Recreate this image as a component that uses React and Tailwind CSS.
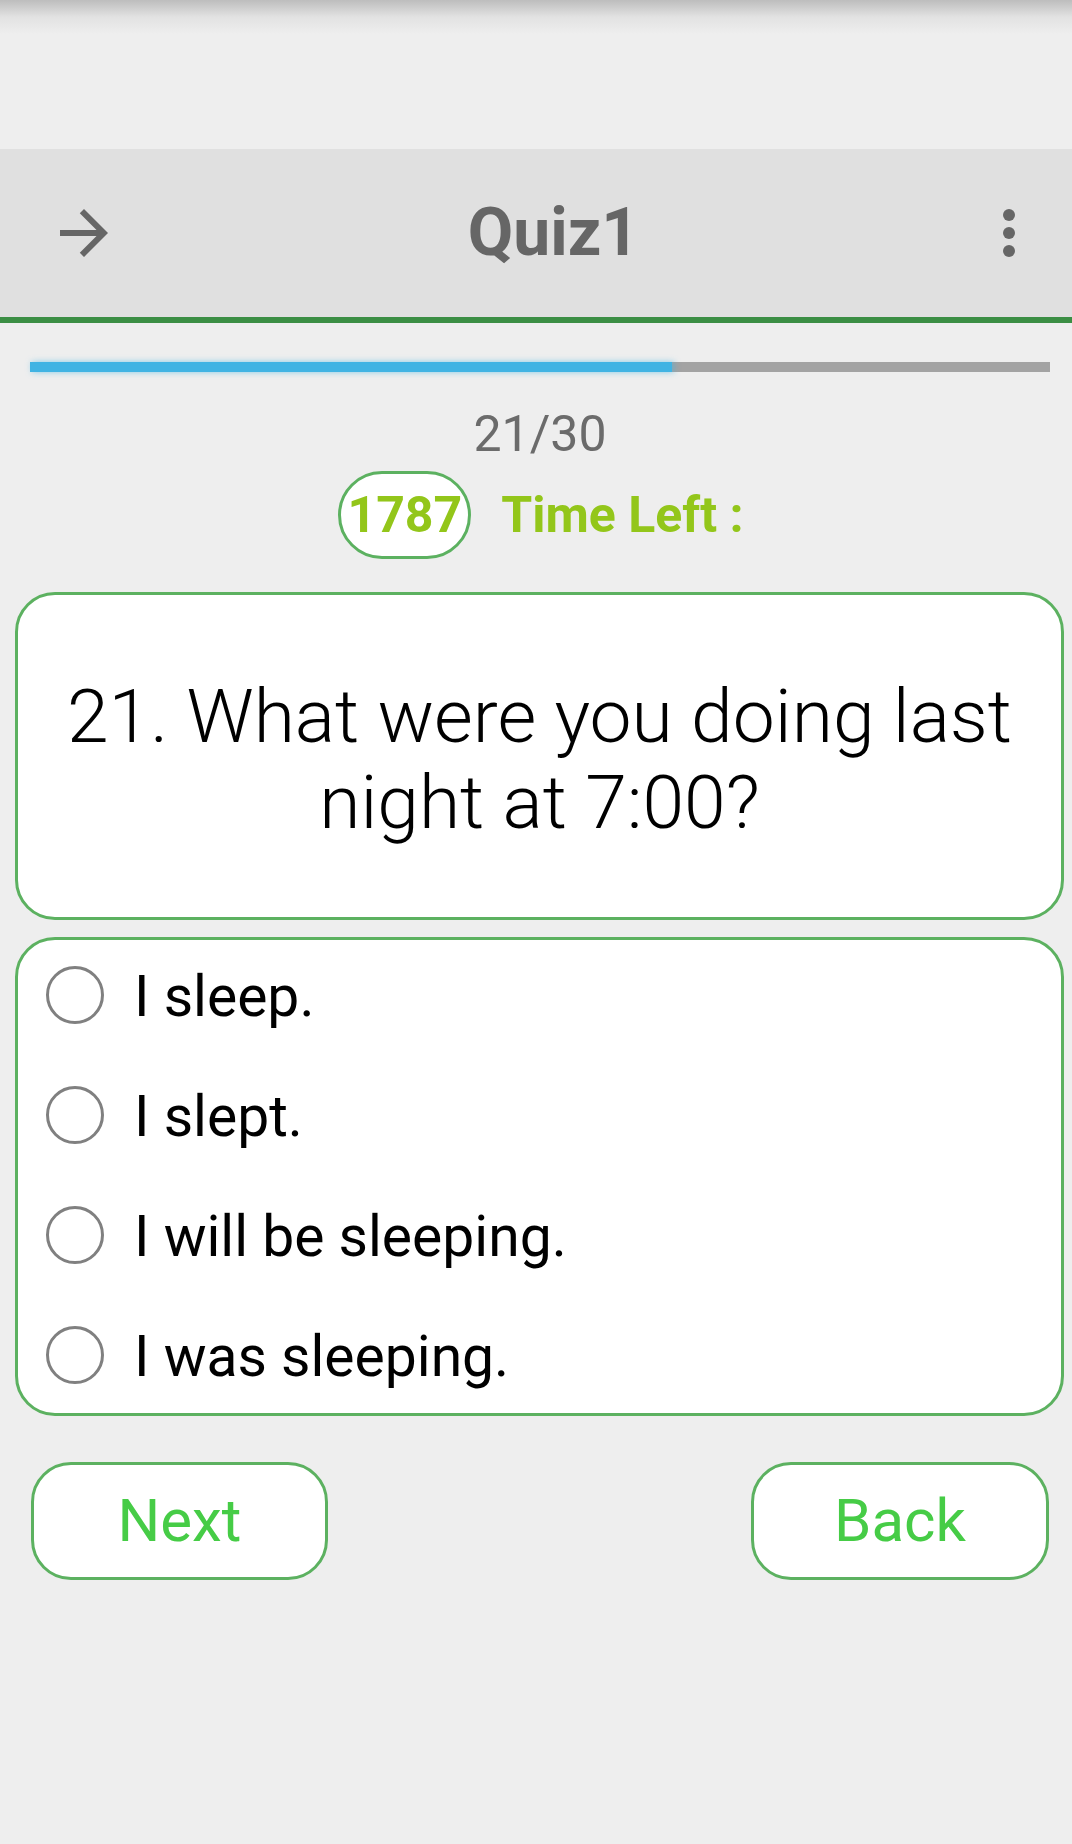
import React, { useState } from 'react';

const options = ['I sleep.', 'I slept.', 'I will be sleeping.', 'I was sleeping.'];

const ArrowIcon = () => (
  <svg viewBox="0 0 24 24" className="w-[72px] h-[72px]" fill="#666666">
    <path d="M12 4l-1.41 1.41L16.17 11H4v2h12.17l-5.58 5.59L12 20l8-8z" />
  </svg>
);

const MoreIcon = () => (
  <svg viewBox="0 0 24 24" className="w-[72px] h-[72px]" fill="#666666">
    <circle cx="12" cy="6" r="2" />
    <circle cx="12" cy="12" r="2" />
    <circle cx="12" cy="18" r="2" />
  </svg>
);

const App = () => {
  const [selected, setSelected] = useState(null);

  return (
    <div className="w-[1072px] h-[1844px] bg-[#eeeeee] font-['Roboto',sans-serif] overflow-hidden">
      {/* status bar area */}
      <div className="h-[149px]">
        <div className="h-[34px] bg-gradient-to-b from-[#bdbdbd] via-[#e2e2e2] to-[#eeeeee]" />
      </div>

      {/* toolbar */}
      <div className="h-[168px] bg-[#e0e0e0] flex items-center justify-between px-[48px] pr-[27px]">
        <ArrowIcon />
        <h1 className="text-[66px] font-bold text-[#666666] leading-none ml-[14px]">Quiz1</h1>
        <MoreIcon />
      </div>
      <div className="h-[6px] bg-[#3b8e44]" />

      {/* progress */}
      <div className="mt-[39px] ml-[30px] mr-[22px] h-[10px] bg-[#a3a3a3] relative">
        <div className="h-[10px] w-[642px] bg-[#40b3e3] shadow-[2px_0_6px_rgba(64,179,227,0.6)]" />
      </div>

      <p className="mt-[33px] text-center text-[50px] leading-[58px] text-[#6b6b6b] pl-[8px]">21/30</p>

      <div className="mt-[8px] flex items-center justify-center gap-[30px] pl-[10px]">
        <div className="w-[133px] h-[88px] rounded-full border-[3px] border-[#5cb160] bg-white flex items-center justify-center">
          <span className="text-[50px] font-bold text-[#93c61a] leading-none">1787</span>
        </div>
        <span className="text-[50px] font-bold text-[#93c61a] leading-none">Time Left :</span>
      </div>

      {/* question */}
      <div className="mt-[33px] mx-[15px] mr-[8px] h-[328px] bg-white border-[3px] border-[#5cb160] rounded-[40px] flex items-center justify-center px-[16px]">
        <p className="text-center text-[75px] leading-[86px] font-light text-black mt-[6px]">
          21. What were you doing last night at 7:00?
        </p>
      </div>

      {/* options */}
      <div className="mt-[17px] mx-[15px] mr-[8px] bg-white border-[3px] border-[#5cb160] rounded-[40px]">
        <div className="-mt-[3px] -mb-[4px]">
          {options.map((opt, i) => (
            <label
              key={opt}
              className="h-[120px] flex items-center pl-[28px] cursor-pointer"
              onClick={() => setSelected(i)}
            >
              <span className="w-[58px] h-[58px] rounded-full border-[3px] border-[#808080] flex items-center justify-center shrink-0 -mt-[4px]">
                {selected === i && <span className="w-[30px] h-[30px] rounded-full bg-[#5cb160]" />}
              </span>
              <span className="ml-[30px] text-[57px] leading-[66px] text-black">{opt}</span>
            </label>
          ))}
        </div>
      </div>

      {/* buttons */}
      <div className="mt-[46px] flex justify-between pl-[31px] pr-[23px]">
        <button className="w-[297px] h-[118px] rounded-[40px] border-[3px] border-[#5cb160] bg-white text-[60px] text-[#46cc46] leading-none">
          Next
        </button>
        <button className="w-[298px] h-[118px] rounded-[40px] border-[3px] border-[#5cb160] bg-white text-[60px] text-[#46cc46] leading-none">
          Back
        </button>
      </div>
    </div>
  );
};

export default App;
